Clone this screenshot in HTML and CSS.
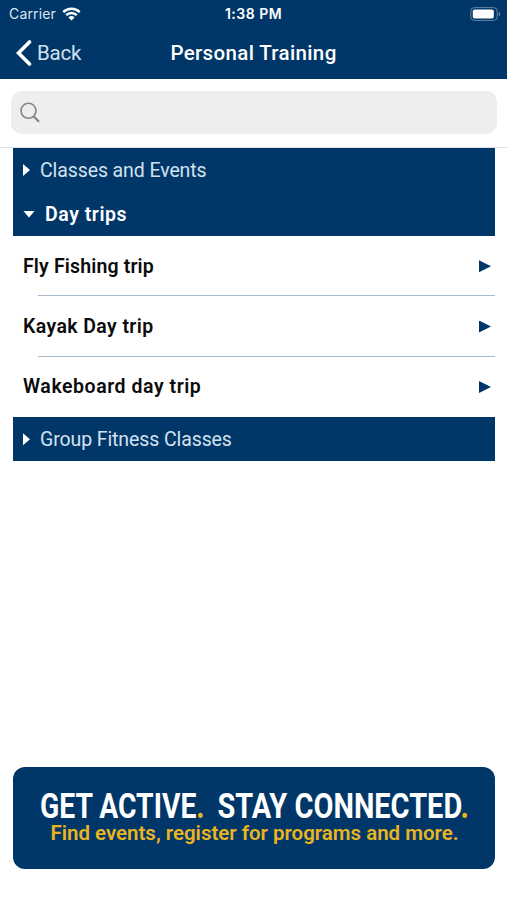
FILE: index.html
```html
<!DOCTYPE html>
<html lang="en">
<head>
    <meta charset="UTF-8">
    <meta name="viewport" content="width=device-width, initial-scale=1.0">
    <title>Personal Training</title>
    <link rel="stylesheet" href="styles.css">
</head>
<body>
    <div class="screen">
        <header class="header">
            <div class="status-bar">
                <div class="carrier">
                    <span>Carrier</span>
                    <svg class="wifi" width="19" height="14" viewBox="0 0 19 14">
                        <path d="M1.3 5.2a11.6 11.6 0 0 1 16.4 0M4.2 8.1a7.5 7.5 0 0 1 10.6 0" fill="none" stroke="#fff" stroke-width="2.5"/>
                        <path d="M6.4 10.4a4.4 4.4 0 0 1 6.2 0L9.5 13.5z" fill="#fff"/>
                    </svg>
                </div>
                <div class="time">1:38 PM</div>
                <svg class="battery" width="31" height="14" viewBox="0 0 31 14">
                    <rect x="0.8" y="0.6" width="26.4" height="12.8" rx="3.6" fill="none" stroke="#6683a3"/>
                    <rect x="2.8" y="2.5" width="21" height="9" rx="1.8" fill="#fff"/>
                    <path d="M28.6 4.8q1.8.7 1.8 2.2t-1.8 2.2z" fill="#6683a3"/>
                </svg>
            </div>
            <div class="nav-bar">
                <a class="back">
                    <svg width="16" height="26" viewBox="0 0 16 26">
                        <path d="M13.5 2 2.5 13l11 11" fill="none" stroke="#fff" stroke-width="3.6" stroke-linecap="round"/>
                    </svg>
                    <span>Back</span>
                </a>
                <h1 class="title">Personal Training</h1>
            </div>
        </header>

        <div class="search">
            <div class="search-field">
                <svg width="20" height="21" viewBox="0 0 20 21">
                    <circle cx="8.5" cy="8.8" r="7.5" fill="none" stroke="#858585" stroke-width="1.6"/>
                    <path d="M13.6 14.2 19 19.8" fill="none" stroke="#858585" stroke-width="2.2"/>
                </svg>
            </div>
        </div>

        <main class="list">
            <div class="section">
                <span class="arrow right"></span>
                <span class="classes">Classes and Events</span>
            </div>
            <div class="section open">
                <span class="arrow down"></span>
                <span class="day-trips">Day trips</span>
            </div>
            <div class="item">
                <span class="fly">Fly Fishing trip</span>
                <span class="arrow go"></span>
            </div>
            <div class="item">
                <span class="kayak">Kayak Day trip</span>
                <span class="arrow go"></span>
            </div>
            <div class="item">
                <span class="wakeboard">Wakeboard day trip</span>
                <span class="arrow go"></span>
            </div>
            <div class="section">
                <span class="arrow right"></span>
                <span class="group">Group Fitness Classes</span>
            </div>
        </main>

        <footer class="banner">
            <svg width="482" height="102" viewBox="0 0 482 102">
                <text class="headline" x="27" y="50.5" textLength="164.5" lengthAdjust="spacingAndGlyphs">GET ACTIVE<tspan class="dot">.</tspan></text>
                <text class="headline" x="204.5" y="50.5" textLength="251.5" lengthAdjust="spacingAndGlyphs">STAY CONNECTED<tspan class="dot">.</tspan></text>
                <text class="tagline" x="37.5" y="73" textLength="408" lengthAdjust="spacingAndGlyphs">Find events, register for programs and more.</text>
            </svg>
        </footer>
    </div>
</body>
</html>
```

FILE: styles.css
```css
* {
    box-sizing: border-box;
}

body {
    margin: 0;
    background: #fff;
    font-family: Roboto, "Liberation Sans", sans-serif;
}

.screen {
    display: flex;
    flex-direction: column;
    height: 900px;
    overflow: hidden;
}

/* Header */
.header {
    height: 79px;
    background: #003768;
    color: #fff;
}

.status-bar {
    display: grid;
    grid-template-columns: 1fr auto 1fr;
    align-items: center;
    height: 27px;
    padding: 0 6px 0 9px;
    font-family: Inter, sans-serif;
    font-size: 14px;
}

.carrier {
    display: flex;
    align-items: center;
    gap: 6px;
    color: #dce5ee;
    letter-spacing: 0.15px;
}

.time {
    margin-right: 3px;
    font-weight: 600;
    font-size: 14px;
    letter-spacing: 0.5px;
}

.battery {
    justify-self: end;
}

.nav-bar {
    display: grid;
    grid-template-columns: 1fr auto 1fr;
    align-items: center;
    height: 52px;
    padding: 0 16px;
}

.back {
    display: flex;
    align-items: center;
    gap: 5px;
    color: #d3e1ee;
    font-size: 20.5px;
    font-weight: 400;
    letter-spacing: -0.2px;
}

.title {
    margin: 0;
    font-size: 20.5px;
    font-weight: 500;
    letter-spacing: 0.35px;
}

/* Search */
.search {
    height: 69px;
    padding: 12px 10px 13px 11px;
    border-bottom: 1px solid #dfe2e6;
}

.search-field {
    display: flex;
    align-items: center;
    height: 43px;
    padding-left: 9px;
    border-radius: 11px;
    background: #eee;
}

/* Category list */
.list {
    padding: 0 12px 0 13px;
}

.section {
    display: flex;
    align-items: center;
    height: 44px;
    padding-left: 10px;
    background: #003768;
    color: #d3e1ee;
    font-size: 19.5px;
    font-weight: 400;
}

.section.open {
    color: #fff;
    font-weight: 600;
}

.item {
    position: relative;
    display: flex;
    align-items: center;
    justify-content: space-between;
    height: 60.4px;
    padding: 0 4px 0 10px;
    color: #0b0b0b;
    font-size: 19.5px;
    font-weight: 600;
}

/* Inset divider between rows */
.item + .item::before {
    content: '';
    position: absolute;
    top: -1px;
    left: 25px;
    right: 0;
    height: 1px;
    background: #a9b9cc;
}

.classes,
.group {
    letter-spacing: -0.1px;
}

.day-trips,
.wakeboard {
    letter-spacing: 0.55px;
}

.fly {
    letter-spacing: 0.15px;
}

.kayak {
    letter-spacing: 0.4px;
}

.arrow {
    flex: none;
    background: #fff;
}

.arrow.right {
    width: 7px;
    height: 12px;
    margin-right: 10px;
    clip-path: polygon(0 0, 100% 50%, 0 100%);
}

.arrow.down {
    width: 12px;
    height: 7px;
    margin-right: 10px;
    clip-path: polygon(0 0, 100% 0, 50% 100%);
}

.arrow.go {
    width: 12px;
    height: 12px;
    background: #003768;
    clip-path: polygon(0 0, 100% 50%, 0 100%);
}

/* Banner */
.banner {
    height: 102px;
    margin: auto 12px 31px 13px;
    border-radius: 12px;
    background: #003768;
    overflow: hidden;
}

.headline {
    fill: #fff;
    font-size: 35px;
    font-weight: 700;
}

.tagline,
.dot {
    fill: #eab41f;
}

.tagline {
    font-size: 20.5px;
    font-weight: 600;
}
```
